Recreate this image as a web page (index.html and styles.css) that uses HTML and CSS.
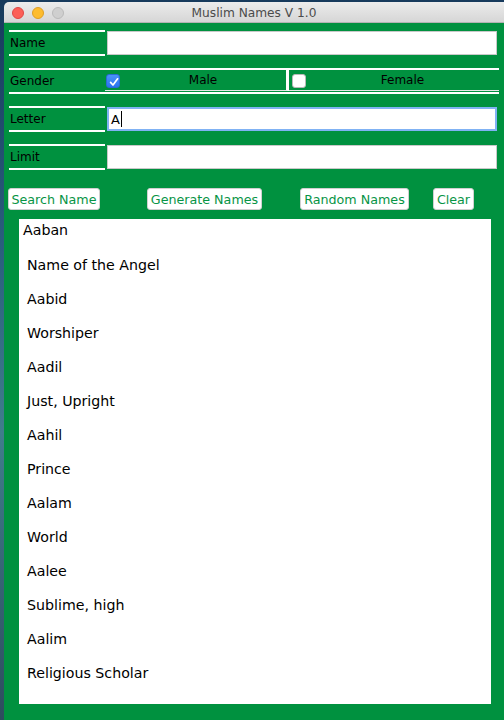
FILE: index.html
```html
<!DOCTYPE html>
<html>
<head>
<meta charset="utf-8">
<title>Muslim Names V 1.0</title>
<link rel="stylesheet" href="styles.css">
</head>
<body>
<div class="window">
  <div class="titlebar">
    <div class="lights">
      <span class="light red"></span>
      <span class="light yellow"></span>
      <span class="light gray"></span>
    </div>
    <div class="title">Muslim Names V 1.0</div>
  </div>
  <div class="content">
    <div class="form">
      <div class="row">
        <div class="label">Name</div>
        <div class="field"></div>
      </div>
      <div class="row">
        <div class="label">Gender</div>
        <div class="opts">
          <div class="opt male">
            <span class="check on"><svg viewBox="0 0 14 14" width="14" height="14"><path d="M3.6 7.4 L6 10 L10.6 3.8" fill="none" stroke="#fff" stroke-width="1.7" stroke-linecap="round" stroke-linejoin="round"/></svg></span>
            <span class="opt-text">Male</span>
          </div>
          <div class="opt female">
            <span class="check off"></span>
            <span class="opt-text">Female</span>
          </div>
        </div>
      </div>
      <div class="row">
        <div class="label">Letter</div>
        <div class="field focus"><span class="val">A</span><span class="caret"></span></div>
      </div>
      <div class="row">
        <div class="label">Limit</div>
        <div class="field"></div>
      </div>
    </div>
    <div class="buttons">
      <button class="btn b-search">Search Name</button>
      <button class="btn b-generate">Generate Names</button>
      <button class="btn b-random">Random Names</button>
      <button class="btn b-clear">Clear</button>
    </div>
    <div class="list">
      <div class="item first">Aaban</div>
      <div class="item">Name of the Angel</div>
      <div class="item">Aabid</div>
      <div class="item">Worshiper</div>
      <div class="item">Aadil</div>
      <div class="item">Just, Upright</div>
      <div class="item">Aahil</div>
      <div class="item">Prince</div>
      <div class="item">Aalam</div>
      <div class="item">World</div>
      <div class="item">Aalee</div>
      <div class="item">Sublime, high</div>
      <div class="item">Aalim</div>
      <div class="item">Religious Scholar</div>
    </div>
  </div>
</div>
</body>
</html>
```

FILE: styles.css
```css
html, body {
  margin: 0;
  padding: 0;
  height: 720px;
  overflow: hidden;
}
body {
  background: linear-gradient(180deg, #173a5c 0%, #2a5f7e 35%, #3f7d8c 60%, #2d4c5e 100%);
  font-family: "DejaVu Sans", sans-serif;
}
.window {
  margin: 2px 0 0 4px;
  height: 718px;
  display: flex;
  flex-direction: column;
  border-top-left-radius: 5px;
  overflow: hidden;
}
.titlebar {
  height: 20px;
  flex: none;
  background: linear-gradient(180deg, #ececec 0%, #d6d6d6 100%);
  border-bottom: 1px solid #b3b3b3;
  display: flex;
  align-items: center;
  position: relative;
}
.lights {
  display: flex;
  gap: 8px;
  padding-left: 8px;
  padding-top: 1px;
}
.light {
  width: 12px;
  height: 12px;
  border-radius: 50%;
  box-sizing: border-box;
}
.light.red { background: #fc5f57; border: 1px solid #df4744; }
.light.yellow { background: #fdbc2e; border: 1px solid #de9f24; }
.light.gray { background: #cfcfcf; border: 1px solid #bababa; }
.title {
  position: absolute;
  left: 0;
  right: 0;
  text-align: center;
  font-size: 12.2px;
  color: #4b4b4b;
  top: 4px;
}
.content {
  flex: 1;
  background: #00913f;
  display: flex;
  flex-direction: column;
}
.form {
  padding: 7px 0 0 5px;
  display: flex;
  flex-direction: column;
  gap: 12px;
}
.row {
  display: flex;
  height: 26px;
}
.label {
  width: 96px;
  box-sizing: border-box;
  border-top: 2px solid #fff;
  border-bottom: 2px solid #fff;
  font-size: 12px;
  line-height: 22px;
  padding-left: 1px;
  color: #000;
  flex: none;
}
.field {
  width: 390px;
  height: 24px;
  box-sizing: border-box;
  margin: 1px 0 0 2px;
  background: #fff;
  border: 1px solid #c9c9c9;
  display: flex;
  align-items: center;
}
.field.focus {
  border: 2px solid #80b2f4;
  padding-left: 2px;
}
.val {
  font-size: 13px;
  color: #000;
}
.caret {
  width: 1px;
  height: 16px;
  background: #000;
  margin-left: 1px;
}
.opts {
  display: flex;
  width: 394px;
  box-sizing: border-box;
  border-top: 2px solid #fff;
  border-bottom: 2px solid #fff;
}
.opt {
  display: flex;
  align-items: flex-start;
  box-sizing: border-box;
  border-bottom: 1px solid #e6e6e6;
  margin-bottom: 1px;
}
.opt.male {
  width: 184px;
  border-right: 3px solid #fff;
}
.opt.female {
  flex: 1;
  padding-left: 3px;
}
.check {
  width: 14px;
  height: 14px;
  box-sizing: border-box;
  border-radius: 3px;
  margin-top: 4px;
  flex: none;
  display: block;
}
.check svg { display: block; }
.check.on {
  margin-left: 1px;
  background: linear-gradient(180deg, #4b93f8 0%, #2a74f0 100%);
  border: 1px solid #2a6ad6;
}
.check.off {
  background: #fff;
  border: 1px solid #b9b9b9;
}
.opt-text {
  flex: 1;
  text-align: center;
  font-size: 12px;
  line-height: 20px;
  color: #000;
}
.buttons {
  display: flex;
  padding: 18px 0 0 4px;
  height: 22px;
}
.btn {
  height: 22px;
  box-sizing: border-box;
  background: #fff;
  border: 1px solid #d0d0d0;
  border-radius: 3px;
  padding: 0;
  font-family: "DejaVu Sans", sans-serif;
  font-size: 12.7px;
  color: #079445;
  text-align: center;
  flex: none;
  white-space: nowrap;
}
.b-search { width: 92px; }
.b-generate { width: 115px; margin-left: 47px; }
.b-random { width: 109px; margin-left: 38px; }
.b-clear { width: 41px; margin-left: 24px; }
.list {
  margin: 9px 0 0 15px;
  width: 472px;
  height: 485px;
  background: #fff;
}
.item {
  font-size: 14.2px;
  color: #000;
  padding-left: 8px;
  line-height: 34px;
}
.item.first {
  padding-left: 4px;
  line-height: 22px;
  margin-bottom: 7px;
}
```
